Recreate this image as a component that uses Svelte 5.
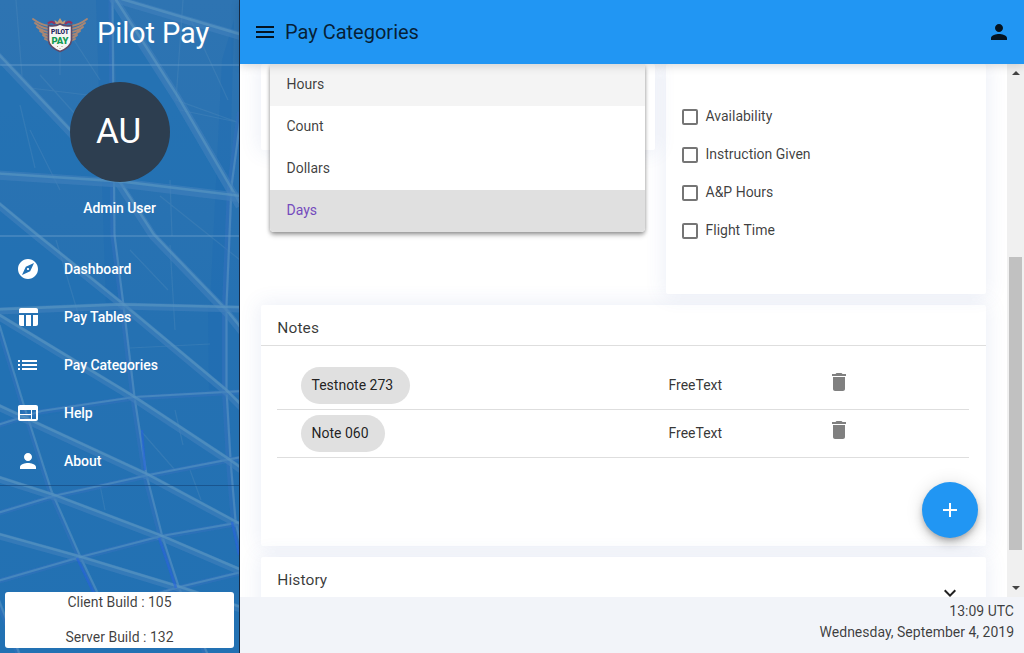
<script>
  const person = 'M12 12c2.21 0 4-1.79 4-4s-1.79-4-4-4-4 1.79-4 4 1.79 4 4 4zm0 2c-2.67 0-8 1.34-8 4v2h16v-2c0-2.66-5.33-4-8-4z';
  const nav = [
    { label: 'Dashboard', d: 'M12 10.9c-.61 0-1.1.49-1.1 1.1s.49 1.1 1.1 1.1 1.1-.49 1.1-1.1-.49-1.1-1.1-1.1zM12 2C6.48 2 2 6.48 2 12s4.48 10 10 10 10-4.48 10-10S17.52 2 12 2zm2.19 12.19L6 18l3.81-8.19L18 6l-3.81 8.19z' },
    { label: 'Pay Tables', d: 'M10 10.02h5V21h-5zM17 21h3c1.1 0 2-.9 2-2v-9h-5v11zm3-18H5c-1.1 0-2 .9-2 2v3h19V5c0-1.1-.9-2-2-2zM3 19c0 1.1.9 2 2 2h3V10H3v9z' },
    { label: 'Pay Categories', d: 'M2 13h2v-2H2v2zm0 4h2v-2H2v2zm0-8h2V7H2v2zm4 4h15v-2H6v2zm0 4h15v-2H6v2zM6 7v2h15V7H6z' },
    { label: 'Help', d: 'M20 4H4c-1.1 0-1.99.9-1.99 2L2 18c0 1.1.9 2 2 2h16c1.1 0 2-.9 2-2V6c0-1.1-.9-2-2-2zm-5 14H4v-4h11v4zm0-5H4V9h11v4zm5 5h-4V9h4v9z' },
    { label: 'About', d: person }
  ];
  const beams = [
    ['M112 -2L240 36', 8], ['M113 -2L177 98L240 206', 9],
    ['M-4 54L120 185L153 236L227 313L244 334', 8],
    ['M-4 175L120 183L244 198', 9], ['M-4 203L36 236L123 306L225 391L244 410', 7],
    ['M-4 311L120 306L244 309', 7], ['M-4 315L133 398L227 460L244 472', 7],
    ['M-4 406L147 476L244 528', 7], ['M-4 478L52 496L160 537L244 573', 7],
    ['M-4 535L79 558L178 588L244 610', 7]
  ];
  const struts = [
    ['M111 -2L113 236L122 306L133 398L145 476L161 538L178 590L206 655', 5],
    ['M240 112L230 187L228 236L225 306L225 391L229 461L234 522L241 553', 6],
    ['M-2 326L22 405L50 492L79 558L99 600', 4],
    ['M-4 426L40 412L133 398L240 392', 5], ['M-4 514L52 497L147 476L240 458', 5],
    ['M-4 582L79 558L160 537L240 523', 5], ['M120 605L178 588L240 573', 5],
    ['M-3 600L18 655', 4]
  ];
  const threads = 'M16 0L22 76M30 88L112 98M56 240L80 320M66 28L100 80M183 0L176 100L237 122M170 180L172 236M180 110L237 122M130 250L168 290M170 245L175 330M130 348L210 344M40 75L85 125M30 130L60 190M160 196L240 260M60 30L60 75M20 105L35 168M175 410L183 445M100 485L105 510M190 470L201 500M190 18L228 100M140 430L175 470';
  const options = ['Hours', 'Count', 'Dollars', 'Days'];
  const checks = ['Availability', 'Instruction Given', 'A&P Hours', 'Flight Time'];
  const notes = ['Testnote 273', 'Note 060'];
</script>

<div class="app">
  <aside>
    <svg class="beams" viewBox="0 0 240 653" aria-hidden="true">
      <defs>
        <linearGradient id="fade" x1="0" y1="0" x2="0" y2="1">
          <stop offset="0" stop-color="#2e74b2" /><stop offset=".5" stop-color="#2571b2" /><stop offset="1" stop-color="#2271b3" />
        </linearGradient>
        <filter id="soft"><feGaussianBlur stdDeviation=".5" /></filter>
      </defs>
      <rect width="240" height="653" fill="url(#fade)" />
      <path d="M0 60L120 185L0 175zM113 0L240 206V197L120 183zM0 203L123 306L0 311zM0 317L133 398L0 425z" fill="#2272b4" opacity=".6" />
      <path d="M96 0h14l4 236l8 70h-16zM222 60l12-40l-8 285h-16zM208 306h15v84h-14z" fill="#1c6bb1" opacity=".35" />
      <g filter="url(#soft)">
        <path d={threads} class="thread" />
        {#each struts as [d, w]}
          <path {d} stroke="#3272bd" stroke-width={w} class="line" />
          <path {d} stroke="#5f9bc4" stroke-width="2.2" class="line glow" transform="translate(1.5 -1)" />
        {/each}
        {#each beams as [d, w]}
          <path {d} stroke="#4180bc" stroke-width={w} class="line" />
          <path {d} stroke="#629ec4" stroke-width="2.6" class="line glow" transform="translate(0.8 -1.6)" />
        {/each}
        <path d="M232 522L239 555M159 538L176 588M77 558L97 600M142 430L145 470" stroke="#2463dc" stroke-width="2.5" class="line" />
      </g>
    </svg>
    <div class="side">
      <div class="brand">
        <svg width="56" height="36" viewBox="0 0 56 36" aria-hidden="true">
          <g fill="none" stroke="#a98673" stroke-width="1.9" stroke-linecap="round">
            <path d="M1 2Q9 8 17 9M3 6Q9 11 17 12M5 10Q10 14 17 15M8 14Q12 17.5 17 18M11 18Q14 21 18 21M13 22Q16 24 19 24" />
            <path d="M55 2Q47 8 39 9M53 6Q47 11 39 12M51 10Q46 14 39 15M48 14Q44 17.5 39 18M45 18Q42 21 38 21M43 22Q40 24 37 24" />
          </g>
          <path d="M23.500 7l-1-4 3 2L28 1l2.500 4 3-2-1 4z" fill="#c19a77" />
          <path d="M16 6.500Q20 3 23 7M33 7Q37 3 40 6.500" stroke="#92345e" stroke-width="2.300" fill="none" />
          <path d="M16.500 8.500Q23 10 28 7Q33 10 39.500 8.500V23Q39 30 28 34.500Q17 30 16.500 23z" fill="#f5f5f2" stroke="#604866" stroke-width="1.600" />
          <text x="28" y="16.500" text-anchor="middle" textLength="18" lengthAdjust="spacingAndGlyphs" class="pilot">PILOT</text>
          <text x="28" y="26.500" text-anchor="middle" class="pay">PAY</text>
          <path d="M25 29.500h1m3.500 0h1M28 31v1" stroke="#b59679" stroke-width="1" />
        </svg>
        <span>Pilot Pay</span>
      </div>
      <div class="profile">
        <div class="avatar">AU</div>
        <div class="user">Admin User</div>
      </div>
      <nav>
        {#each nav as item}
          <a href="#top"><svg width="24" height="24" viewBox="0 0 24 24"><path d={item.d} /></svg><span>{item.label}</span></a>
        {/each}
      </nav>
      <div class="builds"><div>Client Build : 105</div><div>Server Build : 132</div></div>
    </div>
  </aside>

  <div class="main">
    <header>
      <svg width="24" height="24" viewBox="0 0 24 24"><path d="M3 18h18v-2H3v2zm0-5h18v-2H3v2zm0-7v2h18V6H3z" /></svg>
      <h1>Pay Categories</h1>
      <svg class="account" width="24" height="24" viewBox="0 0 24 24"><path d={person} /></svg>
    </header>
    <div class="body">
      <div class="view">
        <div class="top">
          <section class="card units">
            <div class="menu">
              {#each options as o, i}
                <div class:hover={i === 0} class:selected={i === 3}>{o}</div>
              {/each}
            </div>
          </section>
          <section class="card flags">
            {#each checks as c}
              <div class="check"><i></i><span>{c}</span></div>
            {/each}
          </section>
        </div>
        <section class="card notes">
          <h2>Notes</h2>
          <div class="list">
            {#each notes as n}
              <div class="row">
                <div class="name"><span class="chip">{n}</span></div>
                <div class="type">FreeText</div>
                <svg width="24" height="24" viewBox="0 0 24 24"><path d="M6 19c0 1.100.9 2 2 2h8c1.100 0 2-.9 2-2V7H6v12zM19 4h-3.500l-1-1h-5l-1 1H5v2h14V4z" /></svg>
              </div>
            {/each}
          </div>
        </section>
        <section class="card history">
          <h2>History</h2>
          <svg width="24" height="24" viewBox="0 0 24 24"><path d="M7.410 8.590L12 13.170l4.590-4.580L18 10l-6 6-6-6z" /></svg>
        </section>
      </div>
      <div class="scroll"><b class="up"></b><div class="thumb"></div><b class="down"></b></div>
      <button class="fab" aria-label="Add"><svg width="24" height="24" viewBox="0 0 24 24"><path d="M19 13h-6v6h-2v-6H5v-2h6V5h2v6h6v2z" /></svg></button>
    </div>
    <footer><div>13:09 UTC</div><div>Wednesday, September 4, 2019</div></footer>
  </div>
</div>

<style>
  :global(body) { margin: 0; overflow: hidden; }
  * { box-sizing: border-box; }
  .app { display: flex; width: 1024px; height: 653px; overflow: hidden; font-family: Roboto, sans-serif; font-size: 14px; color: rgba(0,0,0,.87); background: #fff; }
  aside { position: relative; width: 240px; flex: none; overflow: hidden; border-right: 1px solid #172b45; }
  .beams { position: absolute; top: 0; left: 0; width: 240px; height: 653px; }
  .line { fill: none; opacity: .6; }
  .glow { opacity: .5; }
  .thread { fill: none; stroke: #5790bd; stroke-width: 1.200; opacity: .3; }
  .side { position: relative; height: 100%; display: flex; flex-direction: column; color: #fff; }
  .brand { height: 66px; display: flex; align-items: center; padding: 6px 0 0 32px; border-bottom: 2px solid rgba(105,158,203,.42); }
  .brand span { margin: -5px 0 0 9px; font-size: 29px; line-height: 40px; letter-spacing: -.1px; white-space: nowrap; }
  .pilot { font: 900 6.600px/1 Roboto, sans-serif; fill: #26255e; }
  .pay { font: 900 9.500px/1 Roboto, sans-serif; fill: #139a52; }
  .profile { height: 171px; padding-top: 16px; display: flex; flex-direction: column; align-items: center; border-bottom: 2px solid rgba(105,158,203,.42); }
  .avatar { width: 100px; height: 100px; border-radius: 50%; background: #2d3e50; font-size: 35px; line-height: 100px; text-align: center; padding-right: 2px; }
  .user { margin-top: 16px; line-height: 20px; font-weight: 500; letter-spacing: -.03px; }
  nav { height: 249px; padding-top: 8px; border-bottom: 1px solid rgba(20,70,125,.65); }
  nav a { height: 48px; display: flex; align-items: center; padding-left: 16px; gap: 24px; color: #fff; text-decoration: none; font-weight: 500; letter-spacing: -.05px; }
  nav svg { width: 24px; flex: none; }
  svg { fill: currentColor; display: block; }
  .builds { margin: auto 5px 5px; height: 56px; background: #fff; border-radius: 3px; color: rgba(0,0,0,.76); text-align: center; line-height: 21px; display: flex; flex-direction: column; justify-content: space-between; }
  .main { flex: 1; display: flex; flex-direction: column; min-width: 0; }
  header { height: 64px; flex: none; background: #2196f3; display: flex; align-items: center; padding: 0 13px; z-index: 3; box-shadow: 0 2px 9px rgba(0,0,0,.15); }
  h1 { margin: 0 auto 0 8px; font-size: 20px; font-weight: 400; line-height: 32px; color: rgba(0,0,0,.8); }
  .body { height: 533px; flex: none; display: flex; position: relative; overflow: hidden; }
  .view { width: 767px; padding: 0 21px; overflow: hidden; }
  .top { display: flex; gap: 11px; height: 241px; align-items: flex-start; }
  .card { background: #fff; box-shadow: 0 0 20px 2px rgba(69,101,173,.1); border-radius: 2px; }
  .units { width: 394px; height: 86px; position: relative; }
  .menu { position: absolute; z-index: 2; left: 9px; top: 0; width: 375px; border-radius: 4px; overflow: hidden; background: #fff; box-shadow: 0 2px 4px -1px rgba(0,0,0,.25), 0 4px 5px rgba(0,0,0,.16), 0 1px 4px rgba(0,0,0,.2); }
  .menu div { height: 42px; line-height: 41px; padding-left: 16.500px; color: rgba(0,0,0,.76); }
  .menu .hover { background: #f4f4f4; }
  .menu .selected { background: #e0e0e0; color: #754bbd; }
  .flags { width: 320px; height: 230px; padding: 33px 16px 0; }
  .check { height: 38px; display: flex; align-items: center; gap: 7.500px; color: rgba(0,0,0,.76); }
  .check i { width: 16px; height: 16px; border: 2px solid #757575; border-radius: 2px; margin-top: 2px; }
  .notes { width: 725px; height: 241px; }
  h2 { margin: 0; height: 41px; padding: 6px 16.300px 0; font-size: 15.500px; font-weight: 400; line-height: 35px; letter-spacing: .1px; color: rgba(0,0,0,.78); }
  .notes h2 { border-bottom: 1px solid #dedede; }
  .list { padding: 16px 17px 0 16px; }
  .row { height: 48px; display: flex; align-items: center; border-bottom: 1px solid #dedede; }
  .name { width: 391.500px; padding-left: 24px; }
  .chip { display: inline-block; height: 37px; line-height: 36px; border-radius: 19px; background: #e0e0e0; padding: 0 16.500px 0 10.500px; vertical-align: top; }
  .type { width: 158.500px; margin-top: -2px; color: rgba(0,0,0,.8); }
  .row svg { color: #808080; margin-top: -7px; }
  .history { width: 725px; height: 60px; margin-top: 11px; display: flex; justify-content: space-between; }
  .history svg { margin: 24px 24px 0 0; }
  .scroll { width: 17px; background: #f0f0f0; display: flex; flex-direction: column; align-items: center; padding: 7px 0; }
  .up, .down { width: 0; height: 0; border: 4px solid transparent; }
  .up { border-top: 0; border-bottom-color: #444; }
  .down { border-bottom: 0; border-top-color: #444; margin-top: auto; }
  .thumb { width: 13px; height: 293px; margin-top: 182px; background: #c1c1c1; }
  .fab { position: absolute; left: 682px; top: 418px; width: 56px; height: 56px; padding: 0; border: 0; border-radius: 50%; background: #2196f3; color: #fff; display: grid; place-items: center; box-shadow: 0 3px 5px -1px rgba(0,0,0,.2), 0 6px 10px rgba(0,0,0,.14), 0 1px 18px rgba(0,0,0,.12); }
  footer { height: 56px; background: #f2f4f9; padding: 4px 10px 0; text-align: right; line-height: 21px; color: rgba(0,0,0,.76); position: relative; z-index: 1; }
</style>
